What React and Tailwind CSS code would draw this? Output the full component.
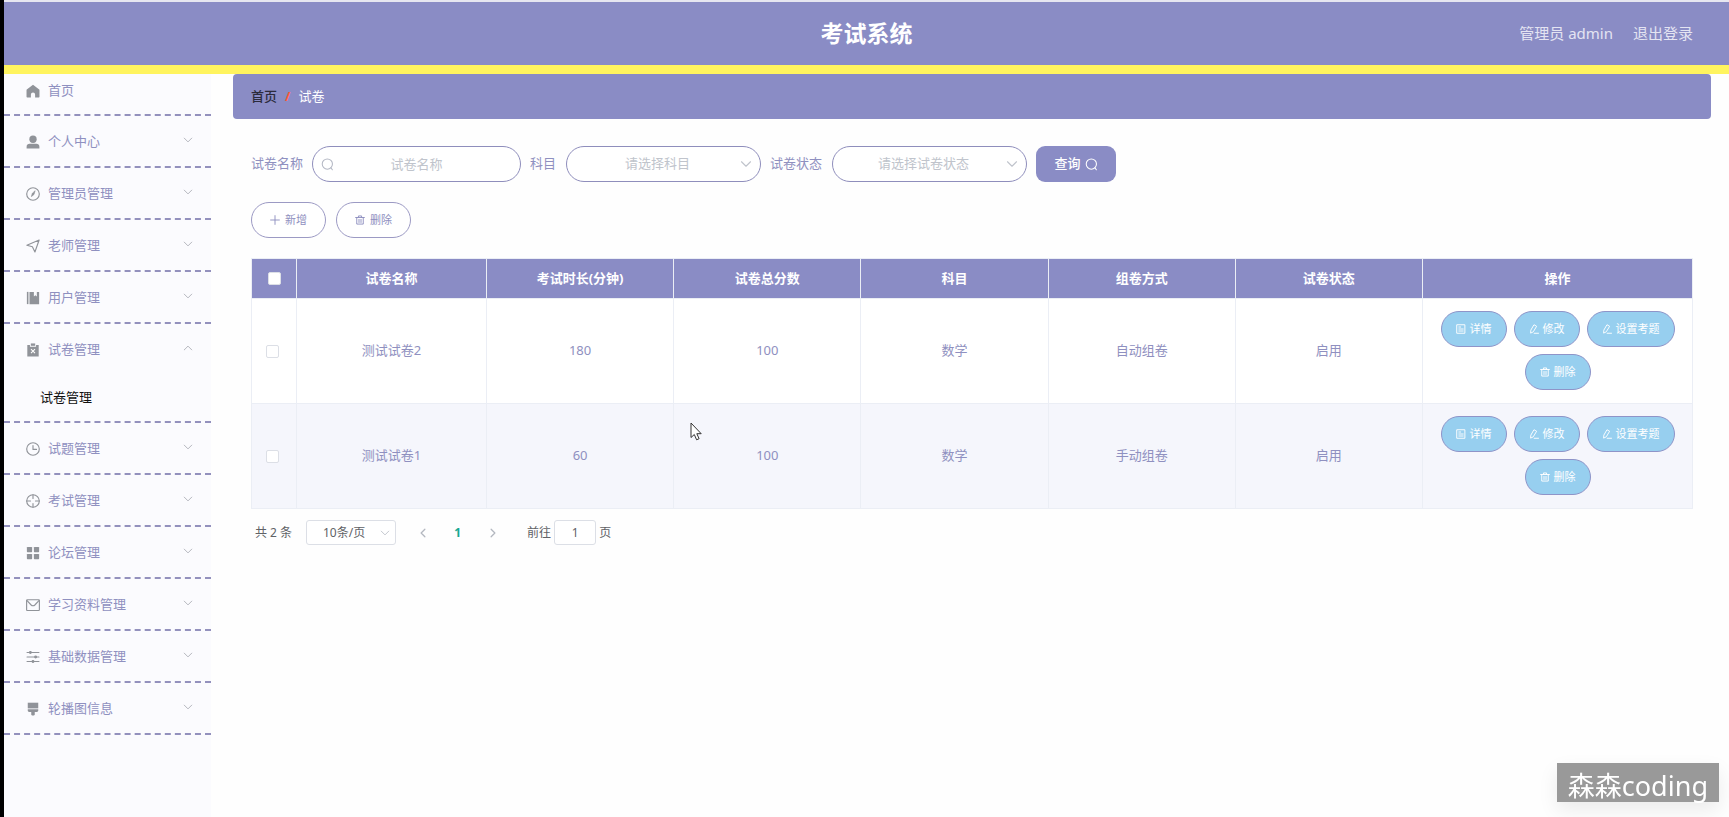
import React from "react";

const stroke = { fill: "none", stroke: "currentColor", strokeLinecap: "round", strokeLinejoin: "round" };

const Svg = ({ className, children, ...rest }) => (
  <svg viewBox="0 0 16 16" aria-hidden="true" className={className} {...rest}>
    {children}
  </svg>
);

const icons = {
  home: <path fill="currentColor" d="M8 .8.9 6.300C.7 6.500.6 6.700.6 7v7.600c0 .5.3.8.8.8h4.200v-3.400a2.400 2.400 0 0 1 4.800 0v3.400h4.200c.5 0 .8-.3.8-.8V7c0-.3-.1-.5-.3-.7z" />,
  user: (
    <g fill="currentColor">
      <circle cx="8" cy="4.800" r="4.200" />
      <path d="M.7 15.500v-2.200c0-2 1.500-3.200 3.400-3.200h7.800c1.900 0 3.400 1.200 3.400 3.200v2.200z" />
    </g>
  ),
  compass: (
    <g {...stroke}>
      <circle cx="8" cy="8" r="7.200" strokeWidth="1.300" />
      <path fill="currentColor" strokeWidth="0.800" d="M10.300 4.700 9 8.700 6.200 10.900 7.200 7.500z" />
    </g>
  ),
  position: <path {...stroke} strokeWidth="1.300" d="M15 1.200 1 7.100l6.300 1.700 2.900 6z" />,
  notebook: (
    <g fill="currentColor">
      <path d="M1 1h1.800v14H1z" />
      <path d="M4 1h5v5.200l1.700-1.400 1.700 1.400V1H15v14H4z" />
    </g>
  ),
  claim: (
    <g>
      <path fill="currentColor" d="M1.500 2.200h3V4.200h7v-2h3V15.500h-13z" />
      <path fill="currentColor" d="M5.500.5h5v2.700h-5z" />
      <path stroke="#fff" strokeWidth="1.200" d="m5.700 7 4.600 4.600M10.300 7l-4.600 4.600" />
    </g>
  ),
  clock: (
    <g {...stroke} strokeWidth="1.300">
      <circle cx="8" cy="8" r="7.200" />
      <path d="M8 4v4.500h4" />
    </g>
  ),
  aim: (
    <g {...stroke} strokeWidth="1.300">
      <circle cx="8" cy="8" r="7.200" />
      <path d="M8 .8v4.400M8 10.800v4.400M.8 8h4.400M10.800 8h4.400" />
    </g>
  ),
  menu: (
    <g fill="currentColor">
      <rect x="1" y="1" width="6" height="6" rx=".8" />
      <rect x="9" y="1" width="6" height="6" rx=".8" />
      <rect x="1" y="9" width="6" height="6" rx=".8" />
      <rect x="9" y="9" width="6" height="6" rx=".8" />
    </g>
  ),
  message: (
    <g {...stroke} strokeWidth="1.300">
      <rect x=".7" y="2" width="14.600" height="12.300" rx=".8" />
      <path d="m1.200 3 4.700 5c1.200 1.200 3 1.200 4.200 0l4.700-5" />
    </g>
  ),
  operation: (
    <g {...stroke} strokeWidth="1.300">
      <path d="M1.200 2.800h13.600M1.200 8h13.600M1.200 13.200h13.600" />
      <g fill="currentColor">
        <circle cx="5" cy="2.800" r="1" />
        <circle cx="11" cy="8" r="1" />
        <circle cx="8" cy="13.200" r="1" />
      </g>
    </g>
  ),
  brush: (
    <g fill="currentColor">
      <path d="M2 .8h12v6.500H2z" />
      <path d="M2 8.300h12v1.500c0 1-.7 1.600-1.600 1.600H10v2.800c0 .8-.9 1.300-2 1.300s-2-.5-2-1.300v-2.800H3.600c-.9 0-1.600-.6-1.600-1.600z" />
    </g>
  ),
};

const SearchIcon = ({ className }) => (
  <Svg className={className}>
    <g {...stroke} strokeWidth="1.300">
      <circle cx="7.800" cy="7.500" r="6.300" />
      <path d="m12.200 12.200 1.800 2.300" />
    </g>
  </Svg>
);
const DownIcon = ({ className }) => (
  <Svg className={className}>
    <path {...stroke} strokeWidth="1.500" d="m2 5 6 6 6-6" />
  </Svg>
);
const PlusIcon = ({ className }) => (
  <Svg className={className}>
    <path {...stroke} strokeWidth="1.500" d="M8 1v14M1 8h14" />
  </Svg>
);
const TrashIcon = ({ className }) => (
  <Svg className={className}>
    <path {...stroke} strokeWidth="1.500" d="M1 4h14M2.800 4v10.500h10.400V4M5.500 3.800V1.500h5v2.300M6.400 7v5M9.600 7v5" />
  </Svg>
);
const EditIcon = ({ className }) => (
  <Svg className={className}>
    <path {...stroke} strokeWidth="1.500" d="M8.500 1.500 12.200 3.600 6.800 12.500 2.600 14.600 2.900 10.400zM8.200 14.800h7" />
  </Svg>
);
const DocIcon = ({ className }) => (
  <Svg className={className}>
    <path {...stroke} strokeWidth="1.500" d="M1.800 1.200h12.400v13.600H1.800zM4.500 4.800h3M4.500 8h7M4.500 11.200h7" />
  </Svg>
);

const menu = [
  { label: "个人中心", icon: "user" },
  { label: "管理员管理", icon: "compass" },
  { label: "老师管理", icon: "position" },
  { label: "用户管理", icon: "notebook" },
  { label: "试卷管理", icon: "claim", children: ["试卷管理"] },
  { label: "试题管理", icon: "clock" },
  { label: "考试管理", icon: "aim" },
  { label: "论坛管理", icon: "menu" },
  { label: "学习资料管理", icon: "message" },
  { label: "基础数据管理", icon: "operation" },
  { label: "轮播图信息", icon: "brush" },
];

function Sidebar() {
  return (
    <nav className="w-[207px] shrink-0 bg-[#fbfbfe] text-[13px] text-[#8f90c0]">
      <a
        href="#home"
        className="flex h-[42px] items-center gap-2 border-b-2 border-dashed border-[#9391bd] pb-[6px] pl-[22px]"
      >
        <Svg className="size-[14px] text-[#909399]">{icons.home}</Svg>
        首页
      </a>
      {menu.map((m) => (
        <div key={m.label} className="border-b-2 border-dashed border-[#9391bd]">
          <button
            type="button"
            aria-expanded={!!m.children}
            className="flex h-[50px] w-full items-center gap-2 pl-[22px] pr-[18px] pt-[2px]"
          >
            <Svg className="size-[14px] text-[#909399]">{icons[m.icon]}</Svg>
            <span className="flex-1 text-left">{m.label}</span>
            <DownIcon
              className={
                m.children ? "mb-1 size-[10px] rotate-180 text-[#b0b2ba]" : "mb-1 size-[10px] text-[#b0b2ba]"
              }
            />
          </button>
          {m.children?.map((c) => (
            <a key={c} href="#papers" className="flex h-[47px] items-center pl-9 text-[#111]">
              {c}
            </a>
          ))}
        </div>
      ))}
    </nav>
  );
}

function FilterSelect({ id, label, placeholder }) {
  return (
    <div className="flex items-center gap-[10px]">
      <label htmlFor={id}>{label}</label>
      <div className="grid w-[195px] items-center">
        <select
          id={id}
          className="col-start-1 row-start-1 h-9 appearance-none rounded-full border border-[#8f8ebc] bg-white pl-3 pr-6 text-center text-[#c0c4cc] [text-align-last:center]"
        >
          <option>{placeholder}</option>
        </select>
        <DownIcon className="pointer-events-none col-start-1 row-start-1 mr-[9px] size-[12px] justify-self-end text-[#c0c4cc]" />
      </div>
    </div>
  );
}

const columns = ["试卷名称", "考试时长(分钟)", "试卷总分数", "科目", "组卷方式", "试卷状态"];
const rows = [
  ["测试试卷2", "180", "100", "数学", "自动组卷", "启用"],
  ["测试试卷1", "60", "100", "数学", "手动组卷", "启用"],
];
const actions = [
  [DocIcon, "详情"],
  [EditIcon, "修改"],
  [EditIcon, "设置考题"],
  [TrashIcon, "删除"],
];

const cell = "border border-[#ebeef5]";
const checkbox = "block mx-auto size-[13px] appearance-none rounded-[2px] border border-[#dcdfe6] bg-white";
const outlineButton =
  "flex h-9 items-center gap-[5px] rounded-full border border-[#9c9ac4] bg-white px-[18px] text-[11px] text-[#8f90c0]";

function PaperTable() {
  return (
    <table className="w-full table-fixed border-collapse text-center text-[13px] text-[#8f90c0]">
      <colgroup>
        <col className="w-[45px]" />
        {columns.map((c, i) => (
          <col key={c} className={i === 0 ? "w-[190px]" : undefined} />
        ))}
        <col className="w-[270px]" />
      </colgroup>
      <thead>
        <tr className="h-[40px] bg-[#8a8cc5] text-white">
          <th className={cell}>
            <input type="checkbox" aria-label="全选" className={checkbox} />
          </th>
          {columns.map((c) => (
            <th key={c} className={cell}>
              {c}
            </th>
          ))}
          <th className={cell}>操作</th>
        </tr>
      </thead>
      <tbody>
        {rows.map((r) => (
          <tr key={r[0]} className="bg-white even:bg-[#f5f6fc]">
            <td className="border border-[#ebeef5] pr-[3px]">
              <input type="checkbox" aria-label={r[0]} className={checkbox} />
            </td>
            {r.map((v, i) => (
              <td key={i} className={cell}>
                {v}
              </td>
            ))}
            <td className={cell}>
              <div className="flex flex-wrap justify-center gap-[7px] px-3 pb-[13px] pt-3">
                {actions.map(([Icon, label]) => (
                  <button
                    key={label}
                    type="button"
                    className="flex h-9 items-center gap-1 rounded-full border border-[#8f94c8] bg-[#97cfef] px-[14px] text-[11px] text-white"
                  >
                    <Icon className="size-[10px]" />
                    {label}
                  </button>
                ))}
              </div>
            </td>
          </tr>
        ))}
      </tbody>
    </table>
  );
}

function Pagination() {
  return (
    <div className="flex items-center pl-1 pt-[11px] text-[12px] text-[#606266]">
      <span>共 2 条</span>
      <div className="ml-[14px] grid w-[90px] items-center">
        <select
          aria-label="每页条数"
          className="col-start-1 row-start-1 h-[25px] appearance-none rounded-[3px] border border-[#dcdfe6] bg-white pl-2 pr-[22px] text-center [text-align-last:center]"
        >
          <option>10条/页</option>
        </select>
        <DownIcon className="pointer-events-none col-start-1 row-start-1 mr-[6px] size-[10px] justify-self-end text-[#c0c4cc]" />
      </div>
      <div className="ml-[9px] flex text-[#b4b8c0]">
        <button type="button" aria-label="上一页" className="grid h-[25px] w-[35px] place-items-center">
          <Svg className="size-[10px]">
            <path {...stroke} strokeWidth="2" d="M11 2 5 8l6 6" />
          </Svg>
        </button>
        <button type="button" className="h-[25px] w-[35px] font-bold text-[#18a890]">
          1
        </button>
        <button type="button" aria-label="下一页" className="grid h-[25px] w-[35px] place-items-center">
          <Svg className="size-[10px]">
            <path {...stroke} strokeWidth="2" d="m5 2 6 6-6 6" />
          </Svg>
        </button>
      </div>
      <label className="ml-[17px] flex items-center gap-[3px]">
        前往
        <input
          defaultValue="1"
          className="h-[25px] w-[42px] rounded-[3px] border border-[#dcdfe6] bg-white text-center"
        />
        页
      </label>
    </div>
  );
}

export default function App() {
  return (
    <div className="flex min-h-screen flex-col border-l-4 border-black bg-[#fefefe] font-['Noto_Sans','Noto_Sans_CJK_SC',sans-serif]">
      <header className="grid h-[74px] grid-cols-[1fr_auto_1fr] items-center border-b-[9px] border-t-2 border-b-[#fff45f] border-t-[#e6e6f0] bg-[#8a8cc5]">
        <h1 className="col-start-2 text-[23px] font-bold text-white">考试系统</h1>
        <div className="flex justify-end gap-5 pr-9 text-[15px] text-[#e4e4f2]">
          <span>管理员 admin</span>
          <a href="#logout">退出登录</a>
        </div>
      </header>

      <div className="flex flex-1">
        <Sidebar />
        <main className="min-w-0 flex-1 pl-[22px] pr-[18px]">
          <div className="flex h-[45px] items-center gap-2 rounded-[4px] bg-[#8a8cc5] px-[18px] text-[13px] text-white">
            <a href="#home" className="font-medium text-[#2b2b3c]">
              首页
            </a>
            <span className="font-bold text-[#ff5a36]">/</span>
            <span>试卷</span>
          </div>

          <div className="px-[18px] pt-[27px]">
            <form className="flex flex-wrap items-center gap-[9px] text-[13px] text-[#8f90c0]">
              <div className="flex items-center gap-[9px]">
                <label htmlFor="name">试卷名称</label>
                <div className="grid w-[209px] items-center">
                  <input
                    id="name"
                    placeholder="试卷名称"
                    className="col-start-1 row-start-1 h-9 w-full rounded-full border border-[#8f8ebc] bg-white px-8 text-center placeholder:text-[#c0c4cc]"
                  />
                  <SearchIcon className="pointer-events-none col-start-1 row-start-1 ml-[9px] size-[13px] text-[#b4b8c4]" />
                </div>
              </div>
              <FilterSelect id="subject" label="科目" placeholder="请选择科目" />
              <FilterSelect id="status" label="试卷状态" placeholder="请选择试卷状态" />
              <button
                type="button"
                className="flex h-9 w-20 items-center justify-center gap-1 rounded-[9px] bg-[#8a8cc5] font-medium text-white"
              >
                查询
                <SearchIcon className="size-[13px]" />
              </button>
            </form>

            <div className="flex gap-[10px] py-5">
              <button type="button" className={outlineButton}>
                <PlusIcon className="size-[10px]" />
                新增
              </button>
              <button type="button" className={outlineButton}>
                <TrashIcon className="size-[10px]" />
                删除
              </button>
            </div>

            <PaperTable />
            <Pagination />
          </div>
        </main>
      </div>

      <div className="fixed bottom-[15px] right-[10px] flex h-[39px] items-center bg-[#999] px-[11px] pb-1 pt-3 text-[27px] text-white shadow-[0_8px_20px_rgba(0,0,0,0.08)]">
        森森coding
      </div>

      <svg aria-hidden="true" viewBox="0 0 12 19" className="pointer-events-none absolute left-[690px] top-[422px] h-[19px] w-3">
        <path d="M1 1v14.500l3.300-3 2.300 5.300 2.500-1.100-2.300-5h4.400z" fill="#fff" stroke="#333" strokeWidth="1" />
      </svg>
    </div>
  );
}
